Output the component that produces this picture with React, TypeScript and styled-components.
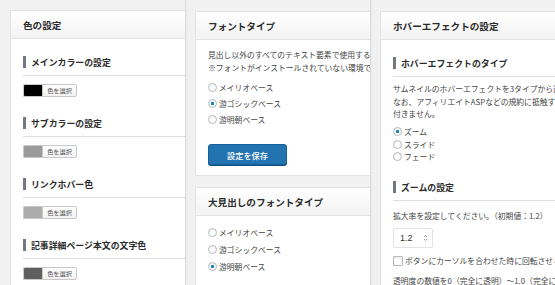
import React from "react";
import styled, { createGlobalStyle } from "styled-components";

const GlobalStyle = createGlobalStyle`
  html, body { margin: 0; padding: 0; background: #f1f1f1; }
  body {
    font-family: "Noto Sans CJK JP", "Noto Sans", sans-serif;
    color: #444;
  }
  * { box-sizing: border-box; }
`;

const Page = styled.div`
  display: flex;
  width: 555px;
  height: 285px;
  overflow: hidden;
  background: #f1f1f1;
`;

const Column = styled.div<{ $w: number; $top: number; $left: number }>`
  flex: 0 0 ${(p) => p.$w}px;
  overflow: hidden;
  padding: ${(p) => p.$top}px 0 0 ${(p) => p.$left}px;
  display: flex;
  flex-direction: column;
  gap: 11px;
`;

const Divider = styled.div`
  flex: 0 0 1px;
  background: #dcdcdc;
  box-shadow: 1px 0 2px rgba(0, 0, 0, 0.05);
`;

const Panel = styled.section`
  width: 330px;
  flex-shrink: 0;
  background: #fff;
  border: 1px solid #e3e3e3;
`;

const PanelHeader = styled.h2`
  margin: 0;
  height: 28px;
  display: flex;
  align-items: center;
  padding: 0 12px;
  border-bottom: 1px solid #e3e3e3;
  background: linear-gradient(#ffffff, #f3f3f3);
  font-size: 9.6px;
  font-weight: bold;
  color: #2b2b2b;
  white-space: nowrap;
`;

const PanelBody = styled.div<{ $pad: string }>`
  padding: ${(p) => p.$pad};
`;

const Section = styled.div`
  margin-bottom: 20px;
`;

const Heading = styled.h3<{ $mt?: number }>`
  margin: ${(p) => p.$mt ?? 0}px 0 0;
  height: 12px;
  display: flex;
  align-items: center;
  border-left: 3px solid #727780;
  padding-left: 5px;
  font-size: 8.9px;
  font-weight: bold;
  color: #2b2b2b;
  white-space: nowrap;
`;

const Rule = styled.div`
  margin-top: 7px;
  border-bottom: 1px solid #dedede;
`;

const Picker = styled.div`
  margin-top: 8px;
  display: flex;
  height: 13px;
`;

const Swatch = styled.span<{ $c: string }>`
  width: 19px;
  background: ${(p) => p.$c};
  border: 1px solid #c8c8c8;
  border-right: none;
  border-radius: 2px 0 0 2px;
`;

const PickButton = styled.span`
  width: 35px;
  display: flex;
  align-items: center;
  justify-content: center;
  border: 1px solid #c8c8c8;
  border-radius: 0 2px 2px 0;
  background: linear-gradient(#fdfdfd, #f3f3f3);
  font-size: 6.2px;
  color: #555;
`;

const Text = styled.p<{ $mt?: number }>`
  margin: ${(p) => p.$mt ?? 0}px 0 0;
  font-size: 7.8px;
  line-height: 12.5px;
  color: #444;
  white-space: nowrap;
`;

const RadioList = styled.div<{ $mt: number }>`
  margin-top: ${(p) => p.$mt}px;
  display: flex;
  flex-direction: column;
`;

const Row = styled.label<{ $h: number }>`
  height: ${(p) => p.$h}px;
  display: flex;
  align-items: center;
  gap: 2px;
  font-size: 7.8px;
  color: #444;
  white-space: nowrap;
`;

const Radio = styled.span<{ $on?: boolean }>`
  width: 9px;
  height: 9px;
  border-radius: 50%;
  border: 1px solid #b4b9be;
  box-shadow: inset 0 1px 2px rgba(0, 0, 0, 0.08);
  background: ${(p) =>
    p.$on ? "radial-gradient(circle, #1e8cbe 0 1.6px, #fff 2px)" : "#fff"};
`;

const Check = styled.span`
  width: 10px;
  height: 10px;
  border: 1px solid #b4b9be;
  border-radius: 1px;
  background: #fff;
  box-shadow: inset 0 1px 2px rgba(0, 0, 0, 0.08);
`;

const SaveButton = styled.button`
  margin-top: 17px;
  width: 79px;
  height: 21px;
  display: flex;
  align-items: center;
  justify-content: center;
  background: #2373b1;
  border: 1px solid #17619a;
  border-radius: 3px;
  box-shadow: 0 1px 0 #0f5386;
  color: #fff;
  font-family: inherit;
  font-size: 8.2px;
  font-weight: 500;
  padding: 0;
`;

const NumberBox = styled.div`
  margin-top: 5px;
  width: 40px;
  height: 20px;
  display: flex;
  align-items: center;
  justify-content: space-between;
  padding: 0 4px 0 6px;
  border: 1px solid #e2e2e2;
  border-radius: 2px;
  font-family: "Liberation Sans", sans-serif;
  font-size: 9px;
  color: #333;
`;

const colorSections = [
  { title: "メインカラーの設定", color: "#000000" },
  { title: "サブカラーの設定", color: "#9a9a9a" },
  { title: "リンクホバー色", color: "#acacac" },
  { title: "記事詳細ページ本文の文字色", color: "#5f5f5f" },
];

const fonts = ["メイリオベース", "游ゴシックベース", "游明朝ベース"];

const Spinner = () => (
  <svg width="5" height="8" viewBox="0 0 5 8">
    <path d="M1 3 L2.5 1.5 L4 3 M1 5 L2.5 6.5 L4 5" stroke="#888" strokeWidth="0.8" fill="none" />
  </svg>
);

export default function App() {
  return (
    <>
      <GlobalStyle />
      <Page>
        <Column $w={185} $top={10} $left={10}>
          <Panel>
            <PanelHeader>色の設定</PanelHeader>
            <PanelBody $pad="17px 12px 0">
              {colorSections.map((s) => (
                <Section key={s.title}>
                  <Heading>{s.title}</Heading>
                  <Rule />
                  <Picker>
                    <Swatch $c={s.color} />
                    <PickButton>色を選択</PickButton>
                  </Picker>
                </Section>
              ))}
            </PanelBody>
          </Panel>
        </Column>
        <Divider />
        <Column $w={184} $top={11} $left={9}>
          <Panel>
            <PanelHeader>フォントタイプ</PanelHeader>
            <PanelBody $pad="9px 12px 10px">
              <Text>見出し以外のすべてのテキスト要素で使用するフォントを選択してください。</Text>
              <Text>※フォントがインストールされていない環境では代替フォントで表示されます。</Text>
              <RadioList $mt={5}>
                {fonts.map((f, i) => (
                  <Row key={f} $h={16}>
                    <Radio $on={i === 1} />
                    {f}
                  </Row>
                ))}
              </RadioList>
              <SaveButton>設定を保存</SaveButton>
            </PanelBody>
          </Panel>
          <Panel>
            <PanelHeader>大見出しのフォントタイプ</PanelHeader>
            <PanelBody $pad="8px 12px 10px">
              <RadioList $mt={0}>
                {fonts.map((f, i) => (
                  <Row key={f} $h={17}>
                    <Radio $on={i === 2} />
                    {f}
                  </Row>
                ))}
              </RadioList>
            </PanelBody>
          </Panel>
        </Column>
        <Divider />
        <Column $w={184} $top={11} $left={9}>
          <Panel>
            <PanelHeader>ホバーエフェクトの設定</PanelHeader>
            <PanelBody $pad="17px 12px 10px">
              <Heading>ホバーエフェクトのタイプ</Heading>
              <Rule />
              <Text $mt={6}>サムネイルのホバーエフェクトを3タイプから選択できます。</Text>
              <Text>なお、アフィリエイトASPなどの規約に抵触する場合は、効果が</Text>
              <Text>付きません。</Text>
              <RadioList $mt={5}>
                {["ズーム", "スライド", "フェード"].map((f, i) => (
                  <Row key={f} $h={12.5}>
                    <Radio $on={i === 0} />
                    {f}
                  </Row>
                ))}
              </RadioList>
              <Heading $mt={18}>ズームの設定</Heading>
              <Rule />
              <Text $mt={9}>拡大率を設定してください。（初期値：1.2）</Text>
              <NumberBox>
                1.2
                <Spinner />
              </NumberBox>
              <RadioList $mt={7}>
                <Row $h={12}>
                  <Check />
                  ボタンにカーソルを合わせた時に回転させる
                </Row>
              </RadioList>
              <Text $mt={8}>透明度の数値を0（完全に透明）〜1.0（完全に不透明）で設定してください。</Text>
            </PanelBody>
          </Panel>
        </Column>
      </Page>
    </>
  );
}
